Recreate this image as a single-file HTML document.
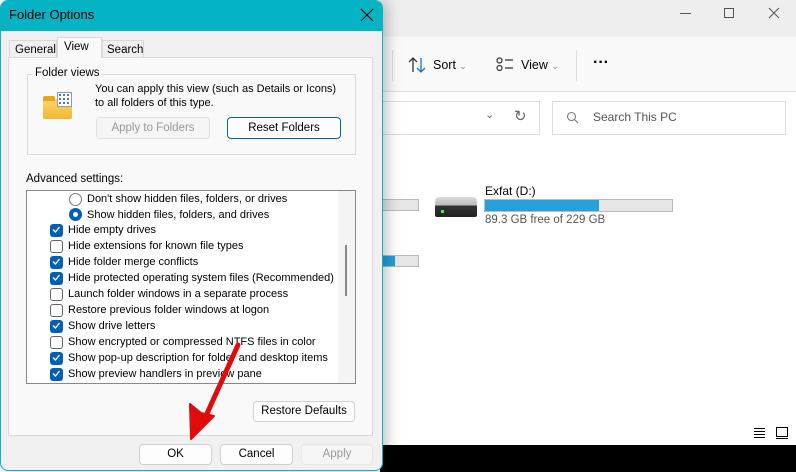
<!DOCTYPE html>
<html><head><style>
*{margin:0;padding:0;box-sizing:border-box}
body{width:796px;height:472px;overflow:hidden;position:relative;background:#fff;font-family:"Liberation Sans",sans-serif;font-size:11px;color:#000}
.a{position:absolute}
.btn{position:absolute;background:#fdfdfd;border:1px solid #d0d0d0;border-radius:4px;text-align:center;line-height:18px;font-size:11.5px}
.row{position:absolute;left:68px;font-size:11px;height:16px;line-height:16px;white-space:nowrap}
.cb{position:absolute;left:50px;width:13px;height:13px;border-radius:3px}
.on{background:#005fb8}
.off{border:1px solid #666;background:#fff}
</style></head><body>
<!-- explorer -->
<div class="a" style="left:380px;top:0;width:416px;height:37px;background:#eeeeee"></div>
<div class="a" style="left:380px;top:37px;width:416px;height:55px;background:#f9f9f9;border-bottom:1px solid #e0e0e0"></div>
<div class="a" style="left:392px;top:50px;width:1px;height:31px;background:#ddd"></div>
<div class="a" style="left:576px;top:50px;width:1px;height:31px;background:#ddd"></div>
<div class="a" style="left:680px;top:13px;width:11px;height:1px;background:#555"></div>
<div class="a" style="left:724px;top:8px;width:10px;height:10px;border:1px solid #555"></div>
<svg class="a" style="left:768px;top:7px" width="12" height="12"><path d="M1 1L11 11M11 1L1 11" stroke="#555" stroke-width="1"/></svg>
<svg class="a" style="left:408px;top:56px" width="20" height="18"><g fill="none" stroke-width="1.3"><path d="M5 16V2M1 6l4-4 4 4" stroke="#333"/><path d="M13 2v14M9 12l4 4 4-4" stroke="#1a6fc0"/></g></svg>
<div class="a" style="left:433px;top:58px;font-size:12.5px">Sort <span style="color:#888;font-size:9px">⌄</span></div>
<svg class="a" style="left:496px;top:57px" width="18" height="15"><g fill="none" stroke="#333" stroke-width="1.2"><circle cx="3.5" cy="3.5" r="2.5"/><circle cx="3.5" cy="11" r="2.5"/><path d="M9 3h8M9 11h8"/></g></svg>
<div class="a" style="left:521px;top:58px;font-size:12.5px">View <span style="color:#888;font-size:9px">⌄</span></div>
<div class="a" style="left:593px;top:54px;font-size:16px;font-weight:bold">···</div>
<div class="a" style="left:380px;top:101px;width:160px;height:34px;border:1px solid #ddd;border-left:none"></div>
<div class="a" style="left:485px;top:108px;color:#666;font-size:11px">⌄</div>
<div class="a" style="left:514px;top:107px;color:#666;font-size:15px">↻</div>
<div class="a" style="left:552px;top:101px;width:234px;height:34px;border:1px solid #ddd"></div>
<svg class="a" style="left:566px;top:111px" width="14" height="14"><circle cx="5.5" cy="5.5" r="4" fill="none" stroke="#777" stroke-width="1.1"/><path d="M8.5 8.5L12 12" stroke="#777" stroke-width="1.1"/></svg>
<div class="a" style="left:593px;top:110px;color:#555;font-size:12px">Search This PC</div>
<div class="a" style="left:380px;top:199px;width:39px;height:12px;background:#e6e6e6;border:1px solid #bbb"></div>
<div class="a" style="left:380px;top:255px;width:39px;height:12px;background:#e6e6e6;border:1px solid #bbb"><div style="width:14px;height:10px;background:#26a0da"></div></div>
<div class="a" style="left:435px;top:197px;width:42px;height:20px;background:linear-gradient(#ddd,#bbb 40%,#333 45%,#222);border-radius:4px 4px 2px 2px"></div>
<div class="a" style="left:441px;top:210px;width:3px;height:3px;background:#3f3"></div>
<div class="a" style="left:485px;top:184px;font-size:12px">Exfat (D:)</div>
<div class="a" style="left:484px;top:199px;width:189px;height:13px;background:#e6e6e6;border:1px solid #bbb"><div style="width:114px;height:11px;background:#26a0da"></div></div>
<div class="a" style="left:485px;top:214px;font-size:11.5px;color:#555">89.3 GB free of 229 GB</div>
<svg class="a" style="left:753px;top:427px" width="14" height="12"><path d="M1 1.5h11M1 4.5h11M1 7.5h11M1 10.5h11" stroke="#000" stroke-width="1"/></svg>
<svg class="a" style="left:775px;top:426px" width="14" height="14"><rect x="1.5" y="1.5" width="11" height="9" fill="none" stroke="#000"/><path d="M1 12.5h12" stroke="#000"/></svg>
<div class="a" style="left:380px;top:445px;width:416px;height:27px;background:#000"></div>
<!-- dialog -->
<div class="a" style="left:0;top:0;width:383px;height:471px;background:#f0f0f0;border:1px solid #0ab3c2;border-radius:8px;overflow:hidden;box-shadow:4px 0 14px rgba(0,0,0,.25)">
 <div class="a" style="left:0;top:0;width:383px;height:30px;background:#04b4c4"></div>
</div>
<div class="a" style="left:9px;top:7px;font-size:13px">Folder Options</div>
<svg class="a" style="left:360px;top:8px" width="14" height="14"><path d="M1 1L13 13M13 1L1 13" stroke="#000" stroke-width="1.1"/></svg>
<!-- tabs -->
<div class="a" style="left:8px;top:57px;width:365px;height:379px;border:1px solid #d9d9d9;background:#f9f9f9"></div>
<div class="a" style="left:9px;top:40px;width:48px;height:18px;border:1px solid #d9d9d9;background:#f0f0f0;padding-left:5px;line-height:18px;font-size:11.5px">General</div>
<div class="a" style="left:57px;top:37px;width:45px;height:21px;border:1px solid #d9d9d9;border-bottom:none;background:#f9f9f9;padding-left:6px;line-height:18px;font-size:11.5px">View</div>
<div class="a" style="left:102px;top:40px;width:42px;height:18px;border:1px solid #d9d9d9;background:#f0f0f0;padding-left:4px;line-height:18px;font-size:11.5px">Search</div>
<!-- folder views -->
<div class="a" style="left:27px;top:74px;width:329px;height:81px;border:1px solid #d9d9d9"></div>
<div class="a" style="left:33px;top:67px;background:#f9f9f9;padding:0 2px;font-size:11.5px">Folder views</div>
<div class="a" style="left:43px;top:99px;width:29px;height:20px;background:linear-gradient(#fbd66e,#f1b830);border-radius:2px"></div>
<div class="a" style="left:43px;top:96px;width:12px;height:5px;background:#e6a817;border-radius:2px 2px 0 0"></div>
<div class="a" style="left:57px;top:92px;width:15px;height:15px;background:#fff;border:1px solid #999;background-image:radial-gradient(#4a78c8 40%,transparent 45%);background-size:4px 4px"></div>
<div class="a" style="left:95px;top:82px;width:250px;line-height:14px;font-size:11px">You can apply this view (such as Details or Icons) to all folders of this type.</div>
<div class="btn" style="left:96px;top:117px;width:114px;height:22px;line-height:20px;color:#999;background:#f5f5f5;border-color:#e0e0e0">Apply to Folders</div>
<div class="btn" style="left:227px;top:117px;width:114px;height:22px;line-height:20px;border-color:#005fb8">Reset Folders</div>
<div class="a" style="left:26px;top:173px;font-size:11.5px">Advanced settings:</div>
<!-- list -->
<div class="a" style="left:26px;top:190px;width:330px;height:194px;border:1px solid #888;background:#fff"></div>
<div class="a" style="left:338px;top:191px;width:17px;height:192px;background:#f4f4f4"></div>
<div class="a" style="left:345px;top:245px;width:2px;height:51px;background:#888"></div>
<div class="a" style="left:69px;top:193px;width:13px;height:13px;border:1px solid #777;border-radius:50%;background:#fff"></div>
<div class="a" style="left:69px;top:208px;width:13px;height:13px;border-radius:50%;background:#005fb8"><div style="margin:4px;width:5px;height:5px;border-radius:50%;background:#fff"></div></div>
<div class="row" style="left:87px;top:191px">Don't show hidden files, folders, or drives</div>
<div class="row" style="left:87px;top:207px">Show hidden files, folders, and drives</div>
<div class="cb on" style="top:224px"></div><div class="row" style="top:222px">Hide empty drives</div>
<div class="cb off" style="top:240px"></div><div class="row" style="top:238px">Hide extensions for known file types</div>
<div class="cb on" style="top:256px"></div><div class="row" style="top:254px">Hide folder merge conflicts</div>
<div class="cb on" style="top:272px"></div><div class="row" style="top:270px">Hide protected operating system files (Recommended)</div>
<div class="cb off" style="top:288px"></div><div class="row" style="top:286px">Launch folder windows in a separate process</div>
<div class="cb off" style="top:304px"></div><div class="row" style="top:302px">Restore previous folder windows at logon</div>
<div class="cb on" style="top:320px"></div><div class="row" style="top:318px">Show drive letters</div>
<div class="cb off" style="top:336px"></div><div class="row" style="top:334px">Show encrypted or compressed NTFS files in color</div>
<div class="cb on" style="top:352px"></div><div class="row" style="top:350px">Show pop-up description for folder and desktop items</div>
<div class="cb on" style="top:368px"></div><div class="row" style="top:366px">Show preview handlers in preview pane</div>
<svg class="a" style="left:48px;top:222px" width="18" height="160"><g fill="none" stroke="#fff" stroke-width="1.3"><path d="M5 7.5l2.5 2.5 4-5"/><path d="M5 39.5l2.5 2.5 4-5"/><path d="M5 55.5l2.5 2.5 4-5"/><path d="M5 103.5l2.5 2.5 4-5"/><path d="M5 135.5l2.5 2.5 4-5"/><path d="M5 151.5l2.5 2.5 4-5"/></g></svg>
<div class="btn" style="left:253px;top:401px;width:102px;height:21px">Restore Defaults</div>
<div class="btn" style="left:139px;top:444px;width:73px;height:21px">OK</div>
<div class="btn" style="left:220px;top:444px;width:73px;height:21px">Cancel</div>
<div class="btn" style="left:301px;top:444px;width:72px;height:21px;color:#999;border-color:#e6e6e6;background:#f5f5f5">Apply</div>
<!-- arrow -->
<svg class="a" style="left:0;top:0" width="796" height="472"><path d="M238 345 L205 418" stroke="#e00b0b" stroke-width="5" stroke-linecap="round"/><path d="M191 439 L190 404 L201 413 L214 416 Z" fill="#e00b0b" stroke="#e00b0b" stroke-width="2" stroke-linejoin="round"/></svg>
</body></html>
